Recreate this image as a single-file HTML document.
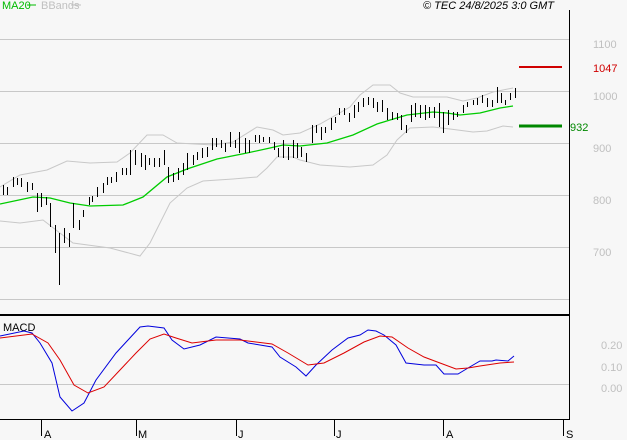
<!DOCTYPE html>
<html><head><meta charset="utf-8"><style>
html,body{margin:0;padding:0;background:#f7f7f7;width:627px;height:440px;overflow:hidden}
text{font-family:"Liberation Sans",sans-serif;font-size:11px}
</style></head><body>
<svg width="627" height="440" viewBox="0 0 627 440" xmlns="http://www.w3.org/2000/svg">
<rect width="627" height="440" fill="#f7f7f7"/>
<g stroke="#c8c8c8" stroke-width="1">
<line x1="0" y1="39.5" x2="569" y2="39.5"/><line x1="0" y1="91.5" x2="569" y2="91.5"/>
<line x1="0" y1="143.5" x2="569" y2="143.5"/><line x1="0" y1="195.5" x2="569" y2="195.5"/>
<line x1="0" y1="247.5" x2="569" y2="247.5"/><line x1="0" y1="299.5" x2="569" y2="299.5"/>
<line x1="0" y1="384.5" x2="569" y2="384.5"/>
</g>
<line x1="569.5" y1="10" x2="569.5" y2="420" stroke="#000"/>
<line x1="0" y1="315" x2="569" y2="315" stroke="#000" stroke-width="2"/>
<line x1="0" y1="419.5" x2="569" y2="419.5" stroke="#000"/>
<g stroke="#000"><line x1="41.5" y1="420" x2="41.5" y2="436"/><line x1="136.5" y1="420" x2="136.5" y2="436"/><line x1="236.5" y1="420" x2="236.5" y2="436"/><line x1="334.5" y1="420" x2="334.5" y2="436"/><line x1="443.5" y1="420" x2="443.5" y2="436"/><line x1="563.5" y1="420" x2="563.5" y2="436"/></g>
<g fill="#000"><text x="44" y="438">A</text><text x="138" y="438">M</text><text x="238" y="438">J</text><text x="336" y="438">J</text><text x="446" y="438">A</text><text x="566" y="438">S</text></g>
<g fill="#c0c0c0"><text x="593" y="48">1100</text><text x="593" y="100">1000</text><text x="593" y="152">900</text><text x="593" y="204">800</text><text x="593" y="256">700</text>
<text x="601" y="349">0.20</text><text x="601" y="371">0.10</text><text x="601" y="392">0.00</text></g>
<line x1="519" y1="67" x2="562" y2="67" stroke="#d00000" stroke-width="2"/>
<text x="593" y="72" fill="#d00000">1047</text>
<line x1="519" y1="126" x2="562" y2="126" stroke="#008800" stroke-width="3"/>
<text x="570" y="131" fill="#008800">932</text>
<text x="2" y="9" fill="#00bb00" font-size="10">MA20</text><line x1="27" y1="5" x2="36" y2="5" stroke="#00bb00"/>
<text x="41" y="9" fill="#c0c0c0" font-size="10">BBands</text><line x1="71" y1="5" x2="81" y2="5" stroke="#c0c0c0"/>
<text x="423" y="9" fill="#000" font-style="italic" font-size="10">© TEC 24/8/2025 3:0 GMT</text>
<g fill="none" stroke="#c8c8c8">
<polyline points="0,187 20,175 47,170 67,161 90,163 117,162 130,153 147,135 163,135 177,143 213,145 233,142 257,127 273,130 283,135 300,133 320,124 350,107 360,95 373,85 390,85 400,93 413,97 447,97 463,101 477,98 493,92 513,88"/>
<polyline points="0,221 20,223 43,220 73,243 110,248 140,256 150,243 170,203 187,188 203,181 233,179 257,177 267,168 277,157 293,157 300,160 320,165 350,167 373,165 387,155 397,140 410,128 433,127 450,129 473,132 487,131 503,126 513,127"/>
</g>
<polyline fill="none" stroke="#00cc00" stroke-width="1.3" points="0,204 33,197 50,198 70,203 90,206 123,205 143,197 167,177 187,169 217,159 247,153 270,148 283,145 300,146 327,143 353,135 377,124 390,120 407,115 433,112 447,113 460,115 480,113 500,108 513,106"/>
<path stroke="#000" fill="none" d="M3.5 185V195M7.5 187V195M13.5 177V187M17.5 178V185M21.5 178V187M27.5 182V192M32.5 183V190M37.5 193V212M41.5 193V207M46.5 197V205M50.5 203V227M55.5 225V253M59.5 233V285M64.5 228V243M69.5 233V247M73.5 203V228M79.5 220V230M83.5 210V217M89.5 197V205M92.5 196V202M97.5 187V197M103.5 183V193M107.5 177V185M111.5 177V183M116.5 172V182M122.5 168V175M126.5 168V175M130.5 150V175M135.5 150V165M141.5 153V167M145.5 155V170M149.5 158V165M154.5 158V167M159.5 158V167M164.5 150V165M168.5 167V183M173.5 173V182M178.5 168V180M183.5 163V175M187.5 153V170M193.5 155V165M197.5 152V160M202.5 148V158M207.5 147V157M212.5 138V150M216.5 138V147M221.5 140V148M225.5 143V152M230.5 132V147M235.5 140V148M239.5 132V153M245.5 138V153M249.5 140V153M255.5 135V142M259.5 135V143M263.5 137V142M269.5 137V143M274.5 142V150M278.5 148V157M283.5 140V158M288.5 147V160M293.5 140V158M297.5 143V158M301.5 147V157M306.5 153V162M312.5 125V143M316.5 125V133M321.5 127V140M325.5 127V133M331.5 118V130M335.5 117V123M339.5 108V115M344.5 108V115M349.5 113V122M354.5 105V118M358.5 102V112M363.5 98V107M368.5 97V105M373.5 98V108M377.5 102V112M382.5 100V112M387.5 108V120M392.5 112V120M397.5 113V120M401.5 115V130M406.5 125V133M411.5 105V122M415.5 103V117M420.5 105V118M425.5 105V120M429.5 107V118M434.5 107V118M439.5 103V127M443.5 112V133M448.5 110V125M453.5 112V120M457.5 112V117M463.5 105V113M467.5 102V107M473.5 100V105M477.5 98V105M482.5 95V103M487.5 98V107M492.5 100V107M497.5 87V103M501.5 93V103M505.5 100V105M510.5 93V100M515.5 88V98"/>
<text x="3" y="331" fill="#000" font-size="10">MACD</text>
<polyline fill="none" stroke="#0000dd" points="0,336 24,331 32,333 40,343 52,363 60,397 72,411 84,403 96,380 116,353 128,340 140,327 148,326 164,328 172,340 184,349 200,345 216,337 240,339 248,343 272,347 280,357 296,367 306,376 316,365 332,350 348,338 360,335 368,330 376,331 384,335 396,345 406,363 424,365 436,365 444,374 458,374 468,368 480,361 492,361 496,360 508,361 514,356"/>
<polyline fill="none" stroke="#dd0000" points="0,338 32,334 48,343 60,360 74,385 88,393 104,387 120,370 136,353 150,339 164,334 176,338 192,343 216,340 240,340 272,344 288,353 308,365 324,363 344,353 364,342 380,336 392,337 408,348 424,357 440,363 456,369 468,368 480,366 500,363 514,362"/>
</svg>
</body></html>
